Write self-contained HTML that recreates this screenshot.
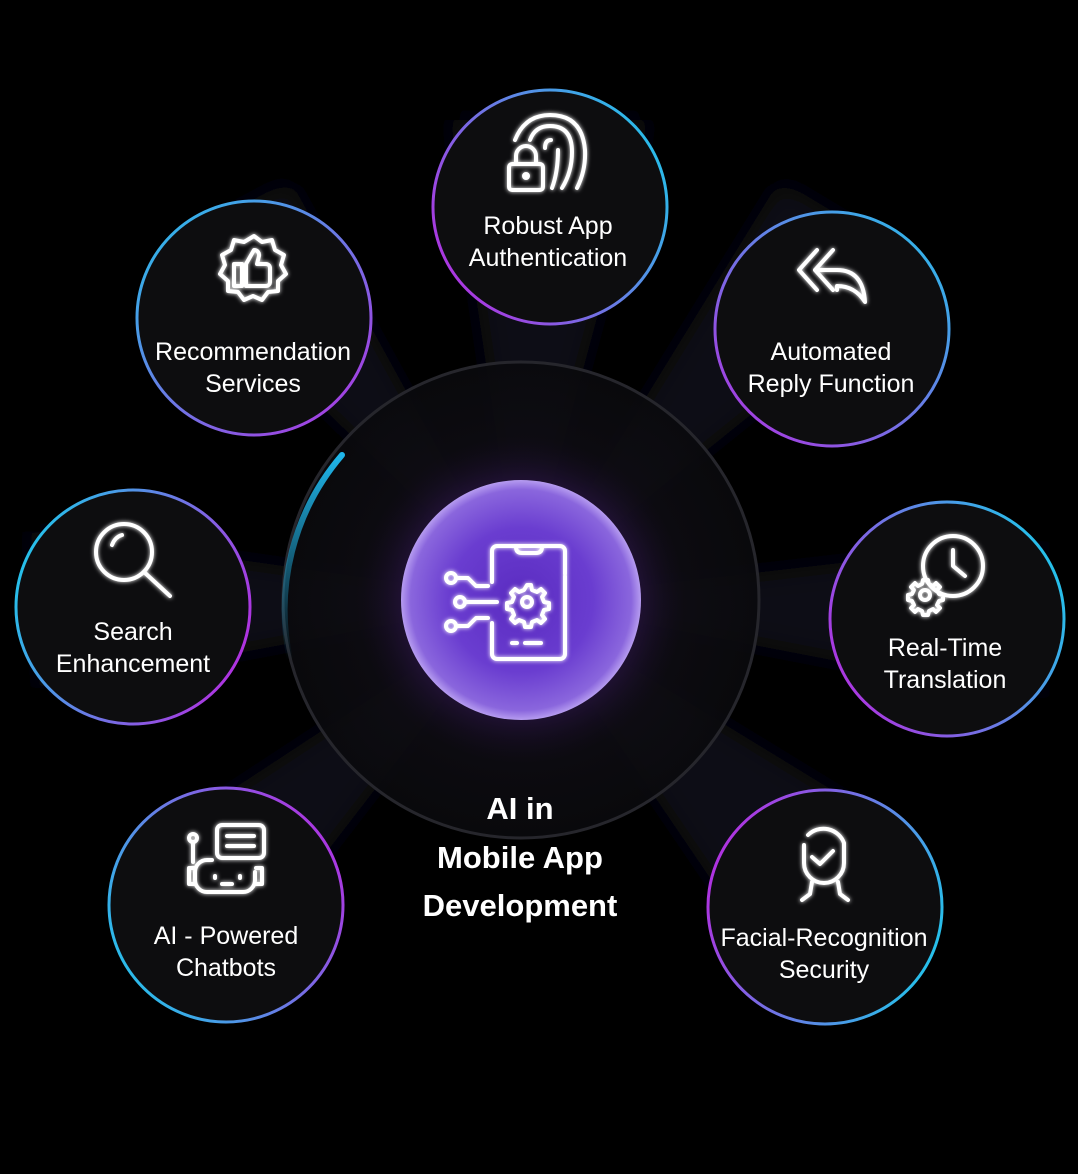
<!DOCTYPE html>
<html><head><meta charset="utf-8"><style>
html,body{margin:0;padding:0;background:#000;}
svg{display:block}
text{font-family:"Liberation Sans",sans-serif;fill:#fff;}
</style></head><body>
<svg width="1078" height="1174" viewBox="0 0 1078 1174" xmlns="http://www.w3.org/2000/svg">
<defs>
<filter id="blur" filterUnits="userSpaceOnUse" x="0" y="0" width="1078" height="1174"><feGaussianBlur stdDeviation="14"/></filter>
<filter id="glow" x="-50%" y="-50%" width="200%" height="200%"><feGaussianBlur stdDeviation="2" result="b"/><feMerge><feMergeNode in="b"/><feMergeNode in="SourceGraphic"/></feMerge></filter>
<radialGradient id="ball" cx="0.5" cy="0.5" r="0.5">
<stop offset="0" stop-color="#5a2bc0"/><stop offset="0.6" stop-color="#6a3dd0"/><stop offset="0.92" stop-color="#8a66dd"/><stop offset="1" stop-color="#b69cf0"/></radialGradient>
<radialGradient id="halo" cx="0.5" cy="0.5" r="0.5">
<stop offset="0.55" stop-color="#3a1a60" stop-opacity="0.9"/><stop offset="1" stop-color="#140a24" stop-opacity="0"/></radialGradient>
<radialGradient id="inner" cx="0.5" cy="0.5" r="0.5">
<stop offset="0" stop-color="#15111c"/><stop offset="1" stop-color="#0a0a0d"/></radialGradient>
<linearGradient id="arc" x1="0" y1="0" x2="0" y2="1"><stop offset="0" stop-color="#1fb6ea"/><stop offset="1" stop-color="#1fb6ea" stop-opacity="0"/></linearGradient>
<linearGradient id="gTop" x1="1" y1="0.2" x2="0" y2="0.8"><stop offset="0" stop-color="#22c4ea"/><stop offset="1" stop-color="#b42ee0"/></linearGradient>
<linearGradient id="gRec" x1="0" y1="0" x2="1" y2="1"><stop offset="0" stop-color="#22c4ea"/><stop offset="1" stop-color="#b42ee0"/></linearGradient>
<linearGradient id="gAut" x1="1" y1="0" x2="0" y2="1"><stop offset="0" stop-color="#22c4ea"/><stop offset="1" stop-color="#b42ee0"/></linearGradient>
<linearGradient id="gSea" x1="0" y1="0.3" x2="1" y2="0.7"><stop offset="0" stop-color="#22c4ea"/><stop offset="1" stop-color="#b42ee0"/></linearGradient>
<linearGradient id="gRt" x1="1" y1="0.3" x2="0" y2="0.8"><stop offset="0" stop-color="#22c4ea"/><stop offset="1" stop-color="#b42ee0"/></linearGradient>
<linearGradient id="gCh" x1="0" y1="0.8" x2="1" y2="0.2"><stop offset="0" stop-color="#22c4ea"/><stop offset="1" stop-color="#b42ee0"/></linearGradient>
<linearGradient id="gFa" x1="1" y1="0.7" x2="0" y2="0.3"><stop offset="0" stop-color="#22c4ea"/><stop offset="1" stop-color="#b42ee0"/></linearGradient>
</defs>
<rect width="1078" height="1174" fill="#000"/>
<!-- rays -->
<g fill="#111114" filter="url(#blur)">
<polygon points="521,600 450,120 650,120"/>
<polygon points="521,600 160,250 290,180"/>
<polygon points="521,600 780,180 930,270"/>
<polygon points="521,600 30,530 40,690"/>
<polygon points="521,600 1040,540 1040,700"/>
<polygon points="521,600 110,870 220,990"/>
<polygon points="521,600 930,850 800,1010"/>
</g>
<circle cx="521" cy="600" r="238" fill="url(#inner)" opacity="0.9"/>
<circle cx="521" cy="600" r="238" fill="none" stroke="#26262c" stroke-width="3"/>
<path d="M342,455 A238,238 0 0 0 290,660" fill="none" stroke="url(#arc)" stroke-width="6" stroke-linecap="round"/>
<circle cx="521" cy="600" r="165" fill="url(#halo)"/>
<circle cx="521" cy="600" r="120" fill="url(#ball)"/>
<!-- center icon -->
<g fill="none" stroke="#fff" stroke-width="4" stroke-linecap="round" stroke-linejoin="round" filter="url(#glow)">
<path d="M492,582 V551 a5,5 0 0 1 5,-5 H560 a5,5 0 0 1 5,5 V574 M565,576 V654 a5,5 0 0 1 -5,5 H497 a5,5 0 0 1 -5,-5 V623"/>
<path d="M516,547 q0,6 6,6 h14 q6,0 6,-6"/>
<path d="M512,643 h5 M525,643 h16"/>
<circle cx="527" cy="602" r="5"/>
<path d="M527,585 l4,0 1,5 5,2 4,-3 4,4 -3,4 2,5 5,1 0,6 -5,1 -2,5 3,4 -4,4 -4,-3 -5,2 -1,5 -6,0 -1,-5 -5,-2 -4,3 -4,-4 3,-4 -2,-5 -5,-1 0,-6 5,-1 2,-5 -3,-4 4,-4 4,3 5,-2 z"/>
<circle cx="451" cy="578" r="5"/><path d="M456,578 h12 l8,8 h12"/>
<circle cx="460" cy="602" r="5"/><path d="M465,602 h32"/>
<circle cx="451" cy="626" r="5"/><path d="M456,626 h12 l8,-8 h12"/>
</g>
<text x="520" y="819" font-size="31" font-weight="bold" text-anchor="middle">AI in</text>
<text x="520" y="868" font-size="31" text-anchor="middle" font-weight="bold">Mobile App</text>
<text x="520" y="916" font-size="31" text-anchor="middle" font-weight="bold">Development</text>

<!-- outer circles -->
<g stroke-width="3">
<circle cx="550" cy="207" r="117" fill="#0d0d0f" stroke="url(#gTop)"/>
<circle cx="254" cy="318" r="117" fill="#0d0d0f" stroke="url(#gRec)"/>
<circle cx="832" cy="329" r="117" fill="#0d0d0f" stroke="url(#gAut)"/>
<circle cx="133" cy="607" r="117" fill="#0d0d0f" stroke="url(#gSea)"/>
<circle cx="947" cy="619" r="117" fill="#0d0d0f" stroke="url(#gRt)"/>
<circle cx="226" cy="905" r="117" fill="#0d0d0f" stroke="url(#gCh)"/>
<circle cx="825" cy="907" r="117" fill="#0d0d0f" stroke="url(#gFa)"/>
</g>
<g font-size="25" text-anchor="middle">
<text x="548" y="234">Robust App</text><text x="548" y="266">Authentication</text>
<text x="253" y="360">Recommendation</text><text x="253" y="392">Services</text>
<text x="831" y="360">Automated</text><text x="831" y="392">Reply Function</text>
<text x="133" y="640">Search</text><text x="133" y="672">Enhancement</text>
<text x="945" y="656">Real-Time</text><text x="945" y="688">Translation</text>
<text x="226" y="944">AI - Powered</text><text x="226" y="976">Chatbots</text>
<text x="824" y="946">Facial-Recognition</text><text x="824" y="978">Security</text>
</g>
<!-- icons -->
<g fill="none" stroke="#fff" stroke-width="4" stroke-linecap="round" stroke-linejoin="round" filter="url(#glow)">
<path d="M515,140 q10,-25 35,-25 q32,0 35,35 q1,20 -8,38"/>
<path d="M530,140 q5,-14 20,-14 q22,0 22,26 q0,20 -10,36"/>
<path d="M558,150 q0,22 -6,38 M545,148 q0,-8 6,-8"/>
<rect x="509" y="164" width="34" height="26" rx="3"/><path d="M516,164 v-8 a10,10 0 0 1 20,0 v8"/>
<circle cx="526" cy="176" r="2"/>
<path d="M254,236 l8,6 10,-2 3,10 9,5 -3,10 5,9 -8,7 0,10 -10,1 -6,8 -9,-4 -9,4 -6,-8 -10,-1 0,-10 -8,-7 5,-9 -3,-10 9,-5 3,-10 10,2 z"/>
<rect x="234" y="264" width="8" height="22"/><path d="M246,286 h20 a4,4 0 0 0 4,-4 v-14 a4,4 0 0 0 -4,-4 h-9 l2,-8 a5,5 0 0 0 -5,-6 l-8,14 z"/>
<path d="M817,250 l-18,20 18,20 M833,250 l-18,20 18,20 M815,270 h22 q26,0 28,32 q-10,-16 -28,-16 v4"/>
<circle cx="124" cy="552" r="28"/><path d="M144,572 l26,24"/><path d="M112,545 q3,-8 10,-10"/>
<circle cx="953" cy="566" r="30" /><path d="M953,550 v16 l12,10"/>
<circle cx="925" cy="595" r="5"/><path d="M925,580 l3,0 1,4 4,2 3,-3 4,4 -3,3 2,4 4,1 0,5 -4,1 -2,4 3,3 -4,4 -3,-3 -4,2 -1,4 -5,0 -1,-4 -4,-2 -3,3 -4,-4 3,-3 -2,-4 -4,-1 0,-5 4,-1 2,-4 -3,-3 4,-4 3,3 4,-2 1,-4 z"/>
<rect x="217" y="825" width="47" height="33" rx="5"/><path d="M227,836 h27 M227,846 h27"/>
<circle cx="193" cy="838" r="4"/><path d="M193,842 v20"/>
<path d="M212,860 h-5 a12,12 0 0 0 -12,12 v8 a12,12 0 0 0 12,12 h36 a12,12 0 0 0 12,-12 v-8"/>
<path d="M195,868 h-6 v16 h6 M256,868 h6 v16 h-6"/>
<path d="M215,876 v2 M240,876 v2 M222,884 h10"/>
<path d="M808,835 a22,22 0 0 1 36,8 v20 a20,20 0 0 1 -40,0 v-18"/>
<path d="M812,857 l8,7 13,-13"/>
<path d="M812,882 l-2,12 -8,6 M838,882 l2,12 8,6"/>
</g>
</svg>
</body></html>
